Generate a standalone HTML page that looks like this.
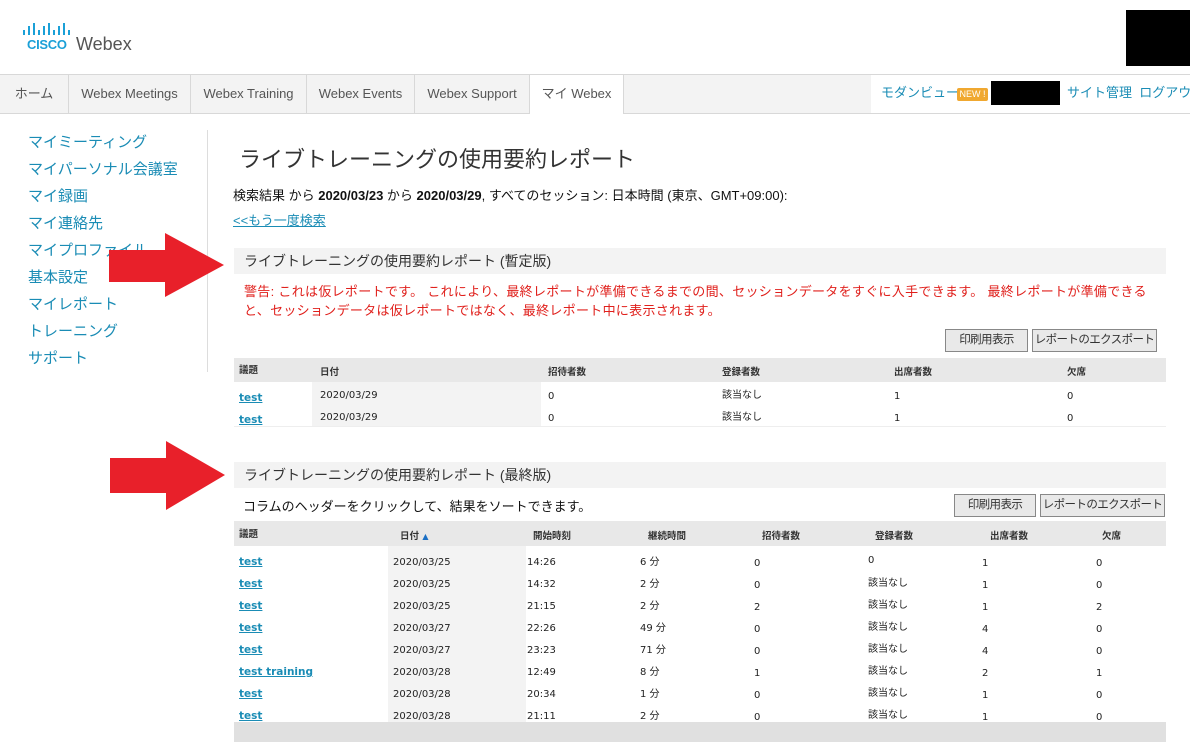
<!DOCTYPE html>
<html><head><meta charset="utf-8"><style>
*{margin:0;padding:0;box-sizing:border-box}
body{width:1190px;height:751px;overflow:hidden;background:#fff;font-family:"Liberation Sans","Noto Sans CJK JP",sans-serif;color:#222;position:relative}
.a{position:absolute;white-space:nowrap}
.tab{position:absolute;top:75px;height:38px;border-right:1px solid #d8d8d8;font-size:13px;color:#555;line-height:38px;text-align:center;background:#f3f3f3}
.side{position:absolute;left:28px;font-size:15px;color:#1a8cb5}
.t{font-family:"DejaVu Sans","Noto Sans CJK JP",sans-serif;font-size:10px;color:#222}
.h{font-family:"DejaVu Sans","Noto Sans CJK JP",sans-serif;font-size:9.5px;font-weight:bold;color:#333}
.l{font-family:"DejaVu Sans",sans-serif;font-size:10.5px;font-weight:bold;color:#1a8cb5;text-decoration:underline}
.btn{position:absolute;height:23px;border:1px solid #888;background:#e9e9e9;font-size:11.5px;line-height:21px;text-align:center;color:#333;white-space:nowrap;overflow:hidden;letter-spacing:-0.6px}
</style></head><body>
<!-- logo -->
<svg class="a" style="left:23px;top:23px" width="50" height="14"><g fill="#1ba0d7">
<rect x="0" y="7" width="2" height="5"/><rect x="5" y="3" width="2" height="9"/><rect x="10" y="0" width="2" height="12"/><rect x="15" y="7" width="2" height="5"/><rect x="20" y="3" width="2" height="9"/><rect x="25" y="0" width="2" height="12"/><rect x="30" y="7" width="2" height="5"/><rect x="35" y="3" width="2" height="9"/><rect x="40" y="0" width="2" height="12"/><rect x="45" y="7" width="2" height="5"/></g></svg>
<div class="a" style="left:27px;top:37px;font-size:13px;font-weight:bold;color:#1ba0d7;letter-spacing:-0.3px">CISCO</div>
<div class="a" style="left:76px;top:34px;font-size:18px;color:#555">Webex</div>
<div class="a" style="left:1126px;top:10px;width:64px;height:56px;background:#000"></div>
<!-- nav -->
<div class="a" style="left:0;top:74px;width:1190px;height:40px;background:#f3f3f3;border-top:1px solid #d8d8d8;border-bottom:1px solid #d8d8d8"></div>
<div class="tab" style="left:0;width:69px">ホーム</div>
<div class="tab" style="left:69px;width:122px">Webex Meetings</div>
<div class="tab" style="left:191px;width:116px">Webex Training</div>
<div class="tab" style="left:307px;width:108px">Webex Events</div>
<div class="tab" style="left:415px;width:115px">Webex Support</div>
<div class="tab" style="left:530px;width:94px;background:#fff;height:39px">マイ Webex</div>
<div class="a" style="left:871px;top:75px;width:319px;height:38px;background:#fff"></div>
<div class="a" style="left:881px;top:85px;font-size:13px;color:#1a8cb5;line-height:16px">モダンビュー</div>
<div class="a" style="left:957px;top:88px;width:31px;height:13px;background:#f0a830;color:#fff;font-size:9px;line-height:13px;text-align:center;border-radius:2px">NEW !</div>
<div class="a" style="left:991px;top:81px;width:69px;height:24px;background:#000"></div>
<div class="a" style="left:1067px;top:85px;font-size:13px;color:#1a8cb5;line-height:16px">サイト管理 &nbsp;ログアウト</div>
<!-- side -->
<div class="side" style="top:131px">マイミーティング</div>
<div class="side" style="top:158px">マイパーソナル会議室</div>
<div class="side" style="top:185px">マイ録画</div>
<div class="side" style="top:212px">マイ連絡先</div>
<div class="side" style="top:239px">マイプロファイル</div>
<div class="side" style="top:266px">基本設定</div>
<div class="side" style="top:293px">マイレポート</div>
<div class="side" style="top:320px">トレーニング</div>
<div class="side" style="top:347px">サポート</div>
<div class="a" style="left:207px;top:130px;width:1px;height:242px;background:#ddd"></div>
<!-- title -->
<div class="a" style="left:239px;top:142px;font-size:22px;color:#333">ライブトレーニングの使用要約レポート</div>
<div class="a" style="left:233px;top:185px;font-size:13px;color:#111">検索結果 から <b>2020/03/23</b> から <b>2020/03/29</b>, すべてのセッション: 日本時間 (東京、GMT+09:00):</div>
<div class="a" style="left:233px;top:210px;font-size:13px;color:#1a8cb5;text-decoration:underline">&lt;&lt;もう一度検索</div>
<!-- section 1 -->
<div class="a" style="left:234px;top:248px;width:932px;height:26px;background:#f3f3f3"></div>
<div class="a" style="left:244px;top:251px;font-size:14px;color:#333">ライブトレーニングの使用要約レポート (暫定版)</div>
<div class="a" style="left:244px;top:282px;font-size:13px;color:#e0201c;line-height:19px;letter-spacing:0.3px">警告: これは仮レポートです。 これにより、最終レポートが準備できるまでの間、セッションデータをすぐに入手できます。 最終レポートが準備できる<br>と、セッションデータは仮レポートではなく、最終レポート中に表示されます。</div>
<div class="btn" style="left:945px;top:329px;width:83px">印刷用表示</div>
<div class="btn" style="left:1032px;top:329px;width:125px">レポートのエクスポート</div>
<div class="a" style="left:234px;top:358px;width:932px;height:24px;background:#e8e8e8"></div>
<div class="a" style="left:312px;top:382px;width:229px;height:44px;background:#f3f3f3"></div>
<div class="a" style="left:234px;top:426px;width:932px;height:1px;background:#eee"></div>
<div class="a h" style="left:239px;top:362px">議題</div><div class="a h" style="left:320px;top:364px">日付</div><div class="a h" style="left:548px;top:364px">招待者数</div><div class="a h" style="left:722px;top:364px">登録者数</div><div class="a h" style="left:894px;top:364px">出席者数</div><div class="a h" style="left:1067px;top:364px">欠席</div>
<div class="a l" style="left:239px;top:392px">test</div><div class="a t" style="left:320px;top:390px">2020/03/29</div><div class="a t" style="left:548px;top:391px">0</div><div class="a t" style="left:722px;top:386px">該当なし</div><div class="a t" style="left:894px;top:391px">1</div><div class="a t" style="left:1067px;top:391px">0</div>
<div class="a l" style="left:239px;top:414px">test</div><div class="a t" style="left:320px;top:412px">2020/03/29</div><div class="a t" style="left:548px;top:413px">0</div><div class="a t" style="left:722px;top:408px">該当なし</div><div class="a t" style="left:894px;top:413px">1</div><div class="a t" style="left:1067px;top:413px">0</div>
<!-- section 2 -->
<div class="a" style="left:234px;top:462px;width:932px;height:26px;background:#f3f3f3"></div>
<div class="a" style="left:244px;top:465px;font-size:14px;color:#333">ライブトレーニングの使用要約レポート (最終版)</div>
<div class="a" style="left:243px;top:496px;font-size:13px;color:#111">コラムのヘッダーをクリックして、結果をソートできます。</div>
<div class="btn" style="left:954px;top:494px;width:82px">印刷用表示</div>
<div class="btn" style="left:1040px;top:494px;width:125px">レポートのエクスポート</div>
<div class="a" style="left:234px;top:521px;width:932px;height:25px;background:#e8e8e8"></div>
<div class="a" style="left:388px;top:546px;width:138px;height:176px;background:#f3f3f3"></div>
<div class="a h" style="left:239px;top:526px">議題</div>
<div class="a h" style="left:400px;top:528px">日付 <span style="color:#1a6fc4;font-size:8px">▲</span></div>
<div class="a h" style="left:533px;top:528px">開始時刻</div><div class="a h" style="left:648px;top:528px">継続時間</div><div class="a h" style="left:762px;top:528px">招待者数</div><div class="a h" style="left:875px;top:528px">登録者数</div><div class="a h" style="left:990px;top:528px">出席者数</div><div class="a h" style="left:1102px;top:528px">欠席</div>
<div id="rows"></div>
<div class="a" style="left:234px;top:722px;width:932px;height:20px;background:#e0e0e0"></div>
<!-- arrows -->
<svg class="a" style="left:0;top:0" width="240" height="751"><g fill="#e8202a">
<polygon points="109,250 165,250 165,233 224,265 165,297 165,282 109,282"/>
<polygon points="110,458 166,458 166,441 225,475 166,510 166,493 110,493"/></g></svg>
<script>
var d=[["test","2020/03/25","14:26","6 分","0","0","1","0"],["test","2020/03/25","14:32","2 分","0","該当なし","1","0"],["test","2020/03/25","21:15","2 分","2","該当なし","1","2"],["test","2020/03/27","22:26","49 分","0","該当なし","4","0"],["test","2020/03/27","23:23","71 分","0","該当なし","4","0"],["test training","2020/03/28","12:49","8 分","1","該当なし","2","1"],["test","2020/03/28","20:34","1 分","0","該当なし","1","0"],["test","2020/03/28","21:11","2 分","0","該当なし","1","0"]];
var xs=[239,393,527,640,754,868,982,1096],h="";
d.forEach(function(r,i){var y=556+i*22;r.forEach(function(v,j){var dy=0;if(j==3)dy=-4;if(j==5)dy=(v=="0")?-2:-5;if(j==4||j>5)dy=1;h+='<div class="a '+(j?'t':'l')+'" style="left:'+xs[j]+'px;top:'+(y+(j?1:0)+dy)+'px">'+v+'</div>';});});
document.getElementById("rows").innerHTML=h;
</script>
</body></html>
